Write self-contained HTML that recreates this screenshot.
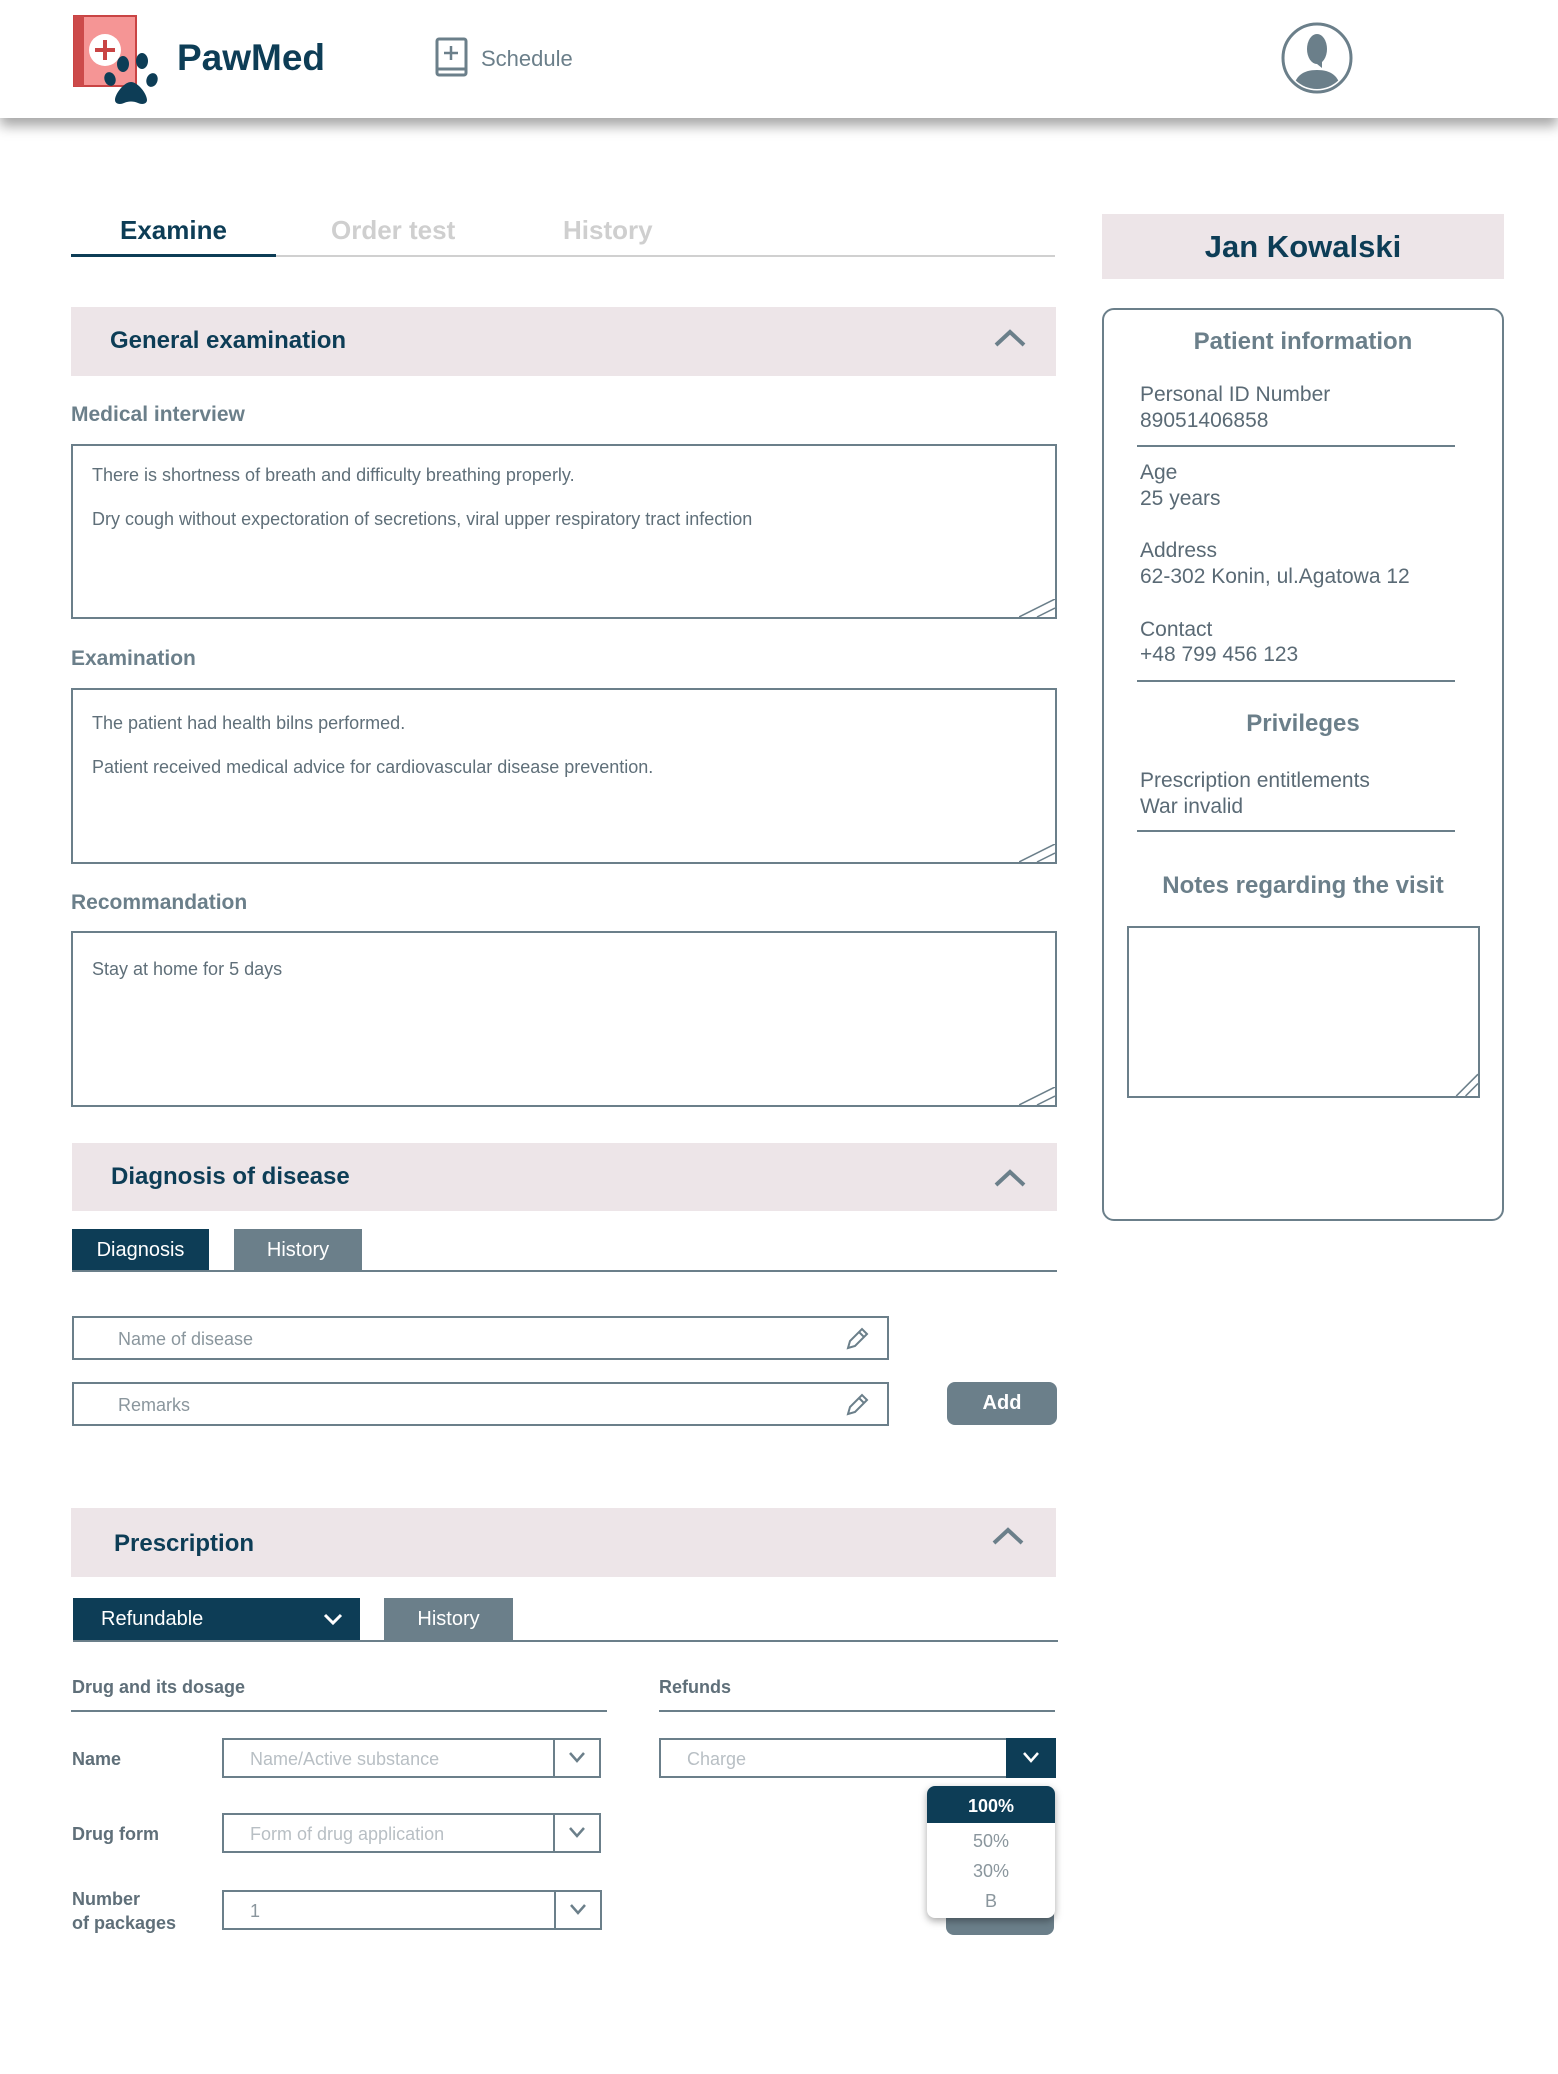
<!DOCTYPE html>
<html><head><meta charset="utf-8"><style>
*{margin:0;padding:0;box-sizing:border-box}
body{width:1558px;height:2074px;position:relative;background:#fff;font-family:"Liberation Sans",sans-serif;overflow:hidden}
.a{position:absolute}
.hdr{left:0;top:0;width:1558px;height:118px;background:#fff;box-shadow:0 8px 12px rgba(0,0,0,.35)}
.navy{color:#0d3d56}
.gray{color:#6b7f8a}
.band{background:#ede5e8}
.ta{border:2px solid #6b7f8a;background:#fff}
.ta span{position:absolute;left:19px;font-size:18px;color:#5f6f79}
.grip{position:absolute;right:0;bottom:0;width:36px;height:18px}
.lbl{font-size:21px;color:#6b7f8a;font-weight:bold}
.pi{left:1140px;font-size:21px;color:#5a6a75}
.hl{height:2px;background:#6b7f8a}
.sel{border:2px solid #6b7f8a;background:#fff}
.sel span{position:absolute;left:26px;top:9px;font-size:18px;color:#b8bfc4}
.sel i{position:absolute;right:0;top:0;width:46px;height:100%;border-left:2px solid #6b7f8a}
.fl{left:72px;font-size:18px;color:#5f6f79;font-weight:bold}
</style></head><body>
<div class="a hdr"></div>
<svg class="a" style="left:70px;top:12px" width="96" height="96" viewBox="70 12 96 96">
<rect x="74" y="16" width="62" height="70" fill="#f59595" stroke="#c94444" stroke-width="2"/>
<rect x="74" y="16" width="10" height="70" fill="#cc4a4a"/>
<circle cx="105" cy="50" r="16" fill="#fff"/>
<path d="M105 40v20M95 50h20" stroke="#c94444" stroke-width="4"/>
<ellipse cx="123" cy="64" rx="6" ry="8" fill="#0d3d56"/>
<ellipse cx="142" cy="61" rx="6" ry="8" fill="#0d3d56"/>
<ellipse cx="110" cy="79" rx="5.5" ry="7" fill="#0d3d56" transform="rotate(-20 110 79)"/>
<ellipse cx="152" cy="80" rx="5.5" ry="7" fill="#0d3d56" transform="rotate(20 152 80)"/>
<path d="M131 82c-7 0-16 12-16 18c0 4 5 5 9 3c4-2 10-2 14 0c4 2 9 1 9-3c0-6-9-18-16-18z" fill="#0d3d56"/>
</svg>
<div class="a navy" style="left:177px;top:37px;font-size:37px;font-weight:bold">PawMed</div>
<svg class="a" style="left:434px;top:36px" width="36" height="44"><rect x="3" y="3" width="29" height="36" rx="2" fill="none" stroke="#6b7f8a" stroke-width="3"/><path d="M3 33h29" stroke="#6b7f8a" stroke-width="3"/><path d="M17 10v14M10 17h14" stroke="#6b7f8a" stroke-width="2.5"/></svg>
<div class="a gray" style="left:481px;top:46px;font-size:22px">Schedule</div>
<svg class="a" style="left:1281px;top:22px" width="72" height="72"><circle cx="36" cy="36" r="34" fill="#fff" stroke="#6b7f8a" stroke-width="3"/><clipPath id="c"><circle cx="36" cy="36" r="31"/></clipPath><g clip-path="url(#c)" fill="#6b7f8a"><ellipse cx="36" cy="27" rx="10" ry="15"/><path d="M31 38h10v8z"/><path d="M12 72c0-16 8-24 24-24s24 8 24 24z"/></g></svg>

<div class="a navy" style="left:120px;top:215px;font-size:26px;font-weight:bold">Examine</div>
<div class="a" style="left:331px;top:215px;font-size:26px;color:#cfcfcf;font-weight:bold">Order test</div>
<div class="a" style="left:563px;top:215px;font-size:26px;color:#cfcfcf;font-weight:bold">History</div>
<div class="a" style="left:71px;top:255px;width:984px;height:2px;background:#d0d0d0"></div>
<div class="a" style="left:71px;top:254px;width:205px;height:3px;background:#0d3d56"></div>

<div class="a band" style="left:1102px;top:214px;width:402px;height:65px"></div>
<div class="a navy" style="left:1102px;top:229px;width:402px;text-align:center;font-size:31px;font-weight:bold">Jan Kowalski</div>
<div class="a" style="left:1102px;top:308px;width:402px;height:913px;border:2px solid #6b7f8a;border-radius:12px"></div>
<div class="a gray" style="left:1102px;top:328px;width:402px;text-align:center;font-size:24px;font-weight:bold">Patient information</div>
<div class="a pi" style="top:383px">Personal ID Number</div>
<div class="a pi" style="top:409px">89051406858</div>
<div class="a hl" style="left:1137px;top:445px;width:318px"></div>
<div class="a pi" style="top:461px">Age</div>
<div class="a pi" style="top:487px">25 years</div>
<div class="a pi" style="top:539px">Address</div>
<div class="a pi" style="top:565px">62-302 Konin, ul.Agatowa 12</div>
<div class="a pi" style="top:618px">Contact</div>
<div class="a pi" style="top:643px">+48 799 456 123</div>
<div class="a hl" style="left:1137px;top:680px;width:318px"></div>
<div class="a gray" style="left:1102px;top:710px;width:402px;text-align:center;font-size:24px;font-weight:bold">Privileges</div>
<div class="a pi" style="top:769px">Prescription entitlements</div>
<div class="a pi" style="top:795px">War invalid</div>
<div class="a hl" style="left:1137px;top:830px;width:318px"></div>
<div class="a gray" style="left:1102px;top:872px;width:402px;text-align:center;font-size:24px;font-weight:bold">Notes regarding the visit</div>
<div class="a ta" style="left:1127px;top:926px;width:353px;height:172px"><svg class="grip" viewBox="0 0 36 36" style="width:28px;height:28px"><path d="M8 36L36 8M20 36L36 20" stroke="#6b7f8a" stroke-width="2"/></svg></div>

<div class="a band" style="left:71px;top:307px;width:985px;height:69px"></div>
<div class="a navy" style="left:110px;top:327px;font-size:24px;font-weight:bold">General examination</div>
<svg class="a" style="left:993px;top:327px" width="34" height="22"><path d="M3 18L17 5L31 18" fill="none" stroke="#6b7f8a" stroke-width="4"/></svg>

<div class="a lbl" style="left:71px;top:403px">Medical interview</div>
<div class="a ta" style="left:71px;top:444px;width:986px;height:175px"><span style="top:19px">There is shortness of breath and difficulty breathing properly.</span><span style="top:63px">Dry cough without expectoration of secretions, viral upper respiratory tract infection</span><svg class="grip" viewBox="0 0 36 18"><path d="M0 18L36 0M18 18L36 9" stroke="#6b7f8a" stroke-width="1.5"/></svg></div>
<div class="a lbl" style="left:71px;top:647px">Examination</div>
<div class="a ta" style="left:71px;top:688px;width:986px;height:176px"><span style="top:23px">The patient had health bilns performed.</span><span style="top:67px">Patient received medical advice for cardiovascular disease prevention.</span><svg class="grip" viewBox="0 0 36 18"><path d="M0 18L36 0M18 18L36 9" stroke="#6b7f8a" stroke-width="1.5"/></svg></div>
<div class="a lbl" style="left:71px;top:891px">Recommandation</div>
<div class="a ta" style="left:71px;top:931px;width:986px;height:176px"><span style="top:26px">Stay at home for 5 days</span><svg class="grip" viewBox="0 0 36 18"><path d="M0 18L36 0M18 18L36 9" stroke="#6b7f8a" stroke-width="1.5"/></svg></div>

<div class="a band" style="left:72px;top:1143px;width:985px;height:68px"></div>
<div class="a navy" style="left:111px;top:1163px;font-size:24px;font-weight:bold">Diagnosis of disease</div>
<svg class="a" style="left:993px;top:1167px" width="34" height="22"><path d="M3 18L17 5L31 18" fill="none" stroke="#6b7f8a" stroke-width="4"/></svg>
<div class="a" style="left:72px;top:1229px;width:137px;height:42px;background:#0d3d56;color:#fff;font-size:20px;text-align:center;line-height:42px">Diagnosis</div>
<div class="a" style="left:234px;top:1229px;width:128px;height:42px;background:#6b7f8a;color:#fff;font-size:20px;text-align:center;line-height:42px">History</div>
<div class="a hl" style="left:72px;top:1270px;width:985px"></div>
<div class="a sel" style="left:72px;top:1316px;width:817px;height:44px"><span style="left:44px;top:11px;color:#8a969d">Name of disease</span></div>
<svg class="a" style="left:843px;top:1325px" width="28" height="28"><path d="M5 23l2-7L19 4l5 5L12 21z M16 7l5 5" fill="none" stroke="#6b7f8a" stroke-width="2"/></svg>
<div class="a sel" style="left:72px;top:1382px;width:817px;height:44px"><span style="left:44px;top:11px;color:#8a969d">Remarks</span></div>
<svg class="a" style="left:843px;top:1391px" width="28" height="28"><path d="M5 23l2-7L19 4l5 5L12 21z M16 7l5 5" fill="none" stroke="#6b7f8a" stroke-width="2"/></svg>
<div class="a" style="left:947px;top:1382px;width:110px;height:43px;background:#6b7f8a;border-radius:8px;color:#fff;font-size:20px;font-weight:bold;text-align:center;line-height:43px">Add</div>

<div class="a band" style="left:71px;top:1508px;width:985px;height:69px"></div>
<div class="a navy" style="left:114px;top:1530px;font-size:24px;font-weight:bold">Prescription</div>
<svg class="a" style="left:991px;top:1525px" width="34" height="22"><path d="M3 18L17 5L31 18" fill="none" stroke="#6b7f8a" stroke-width="4"/></svg>
<div class="a" style="left:73px;top:1598px;width:287px;height:42px;background:#0d3d56;color:#fff;font-size:20px;line-height:42px;padding-left:28px">Refundable</div>
<svg class="a" style="left:322px;top:1611px" width="22" height="16"><path d="M3 4l8 8l8-8" fill="none" stroke="#fff" stroke-width="3"/></svg>
<div class="a" style="left:384px;top:1598px;width:129px;height:42px;background:#6b7f8a;color:#fff;font-size:20px;text-align:center;line-height:42px">History</div>
<div class="a hl" style="left:73px;top:1640px;width:985px"></div>

<div class="a fl" style="top:1677px">Drug and its dosage</div>
<div class="a hl" style="left:71px;top:1710px;width:536px"></div>
<div class="a fl" style="left:659px;top:1677px">Refunds</div>
<div class="a hl" style="left:659px;top:1710px;width:396px"></div>

<div class="a fl" style="top:1749px">Name</div>
<div class="a sel" style="left:222px;top:1738px;width:379px;height:40px"><span>Name/Active substance</span><i></i></div>
<div class="a fl" style="top:1824px">Drug form</div>
<div class="a sel" style="left:222px;top:1813px;width:379px;height:40px"><span>Form of drug application</span><i></i></div>
<div class="a fl" style="top:1887px;line-height:24px">Number<br>of packages</div>
<div class="a sel" style="left:222px;top:1890px;width:380px;height:40px"><span style="color:#8a969d">1</span><i></i></div>
<svg class="a" style="left:566px;top:1750px" width="22" height="16"><path d="M4 3l7 8l7-8" fill="none" stroke="#6b7f8a" stroke-width="2.5"/></svg>
<svg class="a" style="left:566px;top:1825px" width="22" height="16"><path d="M4 3l7 8l7-8" fill="none" stroke="#6b7f8a" stroke-width="2.5"/></svg>
<svg class="a" style="left:567px;top:1902px" width="22" height="16"><path d="M4 3l7 8l7-8" fill="none" stroke="#6b7f8a" stroke-width="2.5"/></svg>

<div class="a sel" style="left:659px;top:1738px;width:397px;height:40px"><span>Charge</span></div>
<div class="a" style="left:1006px;top:1738px;width:50px;height:40px;background:#0d3d56"></div>
<svg class="a" style="left:1020px;top:1750px" width="22" height="16"><path d="M4 3l7 8l7-8" fill="none" stroke="#fff" stroke-width="2.5"/></svg>

<div class="a" style="left:946px;top:1895px;width:108px;height:40px;background:#6b7f8a;border-radius:8px"></div>
<div class="a" style="left:927px;top:1786px;width:128px;height:132px;background:#fff;border-radius:8px;box-shadow:0 3px 8px rgba(0,0,0,.35);overflow:hidden">
<div style="height:37px;background:#0d3d56;color:#fff;font-size:18px;font-weight:bold;text-align:center;line-height:40px">100%</div>
<div style="color:#8a969d;font-size:18px;text-align:center;line-height:30px;margin-top:3px">50%<br>30%<br>B</div>
</div>
</body></html>
